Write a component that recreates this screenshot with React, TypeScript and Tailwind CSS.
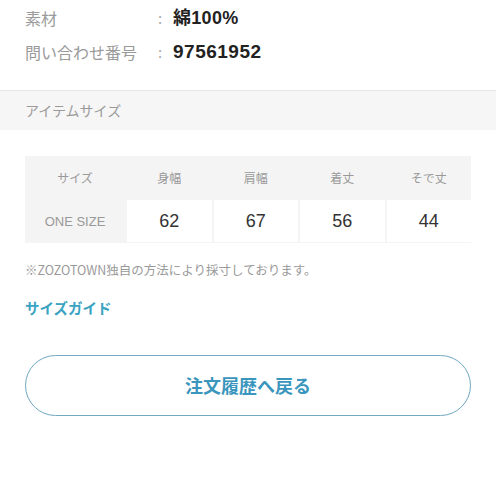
const FONT = { fontFamily: '"Noto Sans CJK JP", "Noto Sans", sans-serif' }
const LATIN = { fontFamily: '"Liberation Sans", "Noto Sans CJK JP", sans-serif' }

const SIZES = [
  { label: "身幅", value: "62" },
  { label: "肩幅", value: "67" },
  { label: "着丈", value: "56" },
  { label: "そで丈", value: "44" },
]

export default function App() {
  return (
    <div className="w-[496px] h-[496px] bg-white overflow-hidden" style={FONT}>
      <div className="px-[25px] pt-[5px]">
        <div className="flex items-center h-[26px]">
          <span className="w-[133px] text-[16px] text-[#9a9a9a]">素材</span>
          <span className="w-[15px] text-[15px] text-[#aaaaaa]">:</span>
          <span className="text-[18px] font-bold text-[#222] tracking-[0.3px]" style={LATIN}>綿100%</span>
        </div>
        <div className="flex items-center h-[26px] mt-[8px]">
          <span className="w-[133px] text-[16px] text-[#9a9a9a] whitespace-nowrap">問い合わせ番号</span>
          <span className="w-[15px] text-[15px] text-[#aaaaaa]">:</span>
          <span className="text-[19px] font-bold text-[#222] tracking-[0.5px]" style={LATIN}>97561952</span>
        </div>
      </div>

      <div className="mt-[25px] h-[40px] bg-[#f6f6f6] border-t border-[#e8e8e8] flex items-center px-[25px]">
        <span className="text-[14px] text-[#9a9a9a]">アイテムサイズ</span>
      </div>

      <div className="px-[25px] pt-[26px]">
        <div className="bg-[#f4f4f4] grid grid-cols-[100px_1fr_1fr_1fr_1fr] gap-x-[2px] h-[87px]">
          <div className="h-[44px] flex items-center justify-center text-[12px] text-[#999]">サイズ</div>
          {SIZES.map(s => (
            <div key={s.label} className="h-[44px] flex items-center justify-center text-[12px] text-[#999]">{s.label}</div>
          ))}
          <div className="h-[43px] flex items-center justify-center text-[13px] text-[#999]" style={LATIN}>ONE SIZE</div>
          {SIZES.map(s => (
            <div key={s.value + s.label} className="h-[42px] bg-white flex items-center justify-center text-[18px] text-[#333]" style={LATIN}>{s.value}</div>
          ))}
        </div>

        <p className="mt-[18px] text-[12.5px] text-[#9a9a9a]">※ZOZOTOWN独自の方法により採寸しております。</p>

        <p className="mt-[17px] text-[14.5px] font-bold text-[#3ba3c2]">サイズガイド</p>

        <button className="mt-[36px] w-full h-[61px] rounded-full border-[1.5px] border-[#6fa8c0] bg-white flex items-center justify-center">
          <span className="text-[18px] font-bold text-[#3a96bd]">注文履歴へ戻る</span>
        </button>
      </div>
    </div>
  )
}
